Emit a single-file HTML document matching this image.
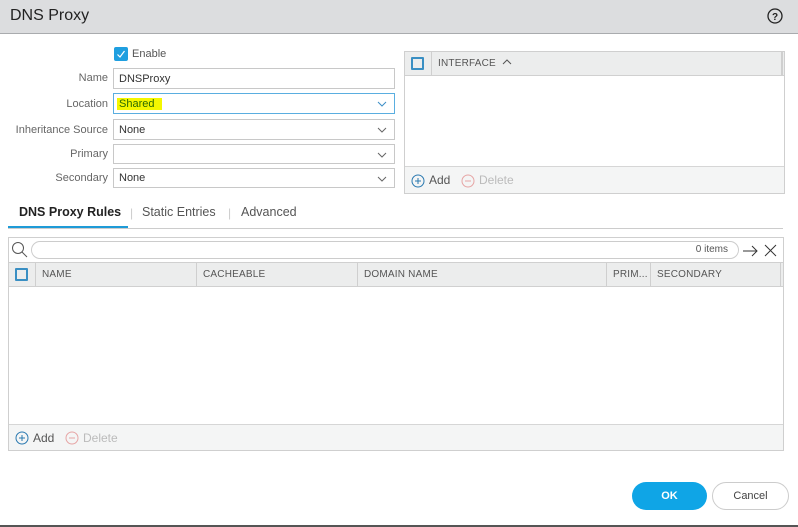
<!DOCTYPE html>
<html><head><meta charset="utf-8"><style>
*{box-sizing:border-box;margin:0;padding:0}
body{width:798px;height:527px;background:#fff;font-family:"Liberation Sans",sans-serif;position:relative;overflow:hidden;color:#333}
.abs{position:absolute}
.hdr{left:0;top:0;width:798px;height:34px;background:#dcdddf;border-bottom:1px solid #a9abae}
.lbl{font-size:11px;color:#666;text-align:right;width:108px;left:0}
.inp{left:113px;width:282px;border:1px solid #c8c8c8;font-size:11px;padding-left:5px;color:#333;line-height:20px}
.chev{position:absolute;right:6px;top:5px}
.gh{background:#eceded;border-bottom:1px solid #d0d0d0;font-size:10px;color:#555;letter-spacing:.2px}
.col{position:absolute;top:0;height:100%;border-left:1px solid #cfcfcf;padding-left:6px;line-height:23px}
.cb{position:absolute;width:13px;height:13px;border:2px solid #3a8fc3;border-radius:1px}
</style></head><body>
<div class="abs hdr"></div>
<div class="abs" style="left:10px;top:7px;font-size:16px;color:#222">DNS Proxy</div>
<svg class="abs" style="left:766px;top:7px" width="18" height="18"><circle cx="9" cy="9" r="7" fill="none" stroke="#222" stroke-width="1.3"/><text x="9" y="13" font-size="10" font-weight="bold" text-anchor="middle" font-family="Liberation Sans" fill="#222">?</text></svg>

<div class="abs" style="left:114px;top:47px;width:14px;height:14px;background:#1f9fe0;border-radius:2px"><svg width="14" height="14"><path d="M3.5 7.5l2.5 2.5 4.5-6" fill="none" stroke="#fff" stroke-width="1.2"/></svg></div>
<div class="abs" style="left:132px;top:48px;font-size:11px;color:#555">Enable</div>

<div class="abs lbl" style="top:72px">Name</div>
<div class="abs inp" style="top:68px;height:21px">DNSProxy</div>
<div class="abs lbl" style="top:98px">Location</div>
<div class="abs inp" style="top:93px;height:21px;border-color:#5aaee0"><span style="background:#f4f700;color:#2a6a00;padding:0 8px 0 2px;margin-left:-2px">Shared</span><svg class="chev" width="12" height="10"><path d="M2 3l4 4 4-4" fill="none" stroke="#3d8fc7"/></svg></div>
<div class="abs lbl" style="top:124px">Inheritance Source</div>
<div class="abs inp" style="top:119px;height:21px">None<svg class="chev" width="12" height="10"><path d="M2 3l4 4 4-4" fill="none" stroke="#666"/></svg></div>
<div class="abs lbl" style="top:148px">Primary</div>
<div class="abs inp" style="top:144px;height:20px"><svg class="chev" width="12" height="10"><path d="M2 3l4 4 4-4" fill="none" stroke="#666"/></svg></div>
<div class="abs lbl" style="top:172px">Secondary</div>
<div class="abs inp" style="top:168px;height:20px;line-height:19px">None<svg class="chev" width="12" height="10"><path d="M2 3l4 4 4-4" fill="none" stroke="#666"/></svg></div>

<div class="abs" style="left:404px;top:51px;width:381px;height:143px;border:1px solid #cfcfcf">
 <div class="abs gh" style="left:0;top:0;width:379px;height:24px"><div class="cb" style="left:6px;top:5px"></div><div class="col" style="left:26px;width:352px;border-right:2px solid #cfcfcf">INTERFACE &nbsp;<svg width="10" height="8"><path d="M1 6l4-4 4 4" fill="none" stroke="#555"/></svg></div></div>
 <div class="abs" style="left:0;top:114px;width:379px;height:27px;background:#f4f5f5;border-top:1px solid #d6d6d6;font-size:12px;line-height:27px">
  <svg class="abs" style="left:6px;top:7px" width="14" height="14"><circle cx="7" cy="7" r="6" fill="none" stroke="#2a79b0"/><path d="M7 4v6M4 7h6" stroke="#2a79b0"/></svg><span class="abs" style="left:24px;color:#555">Add</span>
  <svg class="abs" style="left:56px;top:7px" width="14" height="14"><circle cx="7" cy="7" r="6" fill="none" stroke="#e6a5a5"/><path d="M4 7h6" stroke="#e6a5a5"/></svg><span class="abs" style="left:74px;color:#bbb">Delete</span>
 </div>
</div>

<div class="abs" style="left:19px;top:205px;font-size:12.5px;color:#222;font-weight:bold">DNS Proxy Rules</div>
<div class="abs" style="left:130px;top:206px;font-size:12px;color:#ccc">|</div>
<div class="abs" style="left:142px;top:205px;font-size:12.5px;color:#555">Static Entries</div>
<div class="abs" style="left:228px;top:206px;font-size:12px;color:#ccc">|</div>
<div class="abs" style="left:241px;top:205px;font-size:12.5px;color:#555">Advanced</div>
<div class="abs" style="left:8px;top:228px;width:775px;height:1px;background:#ccc"></div>
<div class="abs" style="left:8px;top:226px;width:120px;height:2px;background:#1e9bd7"></div>

<div class="abs" style="left:8px;top:237px;width:776px;height:214px;border:1px solid #cfcfcf">
 <svg class="abs" style="left:2px;top:3px" width="18" height="18"><circle cx="7" cy="7" r="5.5" fill="none" stroke="#555"/><path d="M11 11l5 5" stroke="#555"/></svg>
 <div class="abs" style="left:22px;top:3px;width:708px;height:18px;border:1px solid #ccc;border-radius:9px;font-size:10px;color:#555;text-align:right;padding-right:10px;line-height:16px">0 items</div>
 <svg class="abs" style="left:733px;top:5px" width="40" height="16"><path d="M1 8h14M10 3l5 5-5 5" fill="none" stroke="#333"/><path d="M23 2l11 11M34 2L23 13" stroke="#333"/></svg>
 <div class="abs gh" style="left:0;top:24px;width:774px;height:25px;border-top:1px solid #d0d0d0">
  <div class="cb" style="left:6px;top:5px"></div>
  <div class="col" style="left:26px">NAME</div>
  <div class="col" style="left:187px">CACHEABLE</div>
  <div class="col" style="left:348px">DOMAIN NAME</div>
  <div class="col" style="left:597px">PRIM...</div>
  <div class="col" style="left:641px;width:131px;border-right:1px solid #cfcfcf">SECONDARY</div>
 </div>
 <div class="abs" style="left:0;top:186px;width:774px;height:26px;background:#f4f5f5;border-top:1px solid #d6d6d6;font-size:12px;line-height:26px">
  <svg class="abs" style="left:6px;top:6px" width="14" height="14"><circle cx="7" cy="7" r="6" fill="none" stroke="#2a79b0"/><path d="M7 4v6M4 7h6" stroke="#2a79b0"/></svg><span class="abs" style="left:24px;color:#555">Add</span>
  <svg class="abs" style="left:56px;top:6px" width="14" height="14"><circle cx="7" cy="7" r="6" fill="none" stroke="#e6a5a5"/><path d="M4 7h6" stroke="#e6a5a5"/></svg><span class="abs" style="left:74px;color:#bbb">Delete</span>
 </div>
</div>

<div class="abs" style="left:632px;top:482px;width:75px;height:28px;background:#0fa5e6;border-radius:14px;color:#fff;font-size:11px;font-weight:bold;text-align:center;line-height:28px">OK</div>
<div class="abs" style="left:712px;top:482px;width:77px;height:28px;border:1px solid #ccc;border-radius:14px;color:#444;font-size:11px;text-align:center;line-height:26px">Cancel</div>
<div class="abs" style="left:0;top:525px;width:798px;height:2px;background:#555"></div>
</body></html>
